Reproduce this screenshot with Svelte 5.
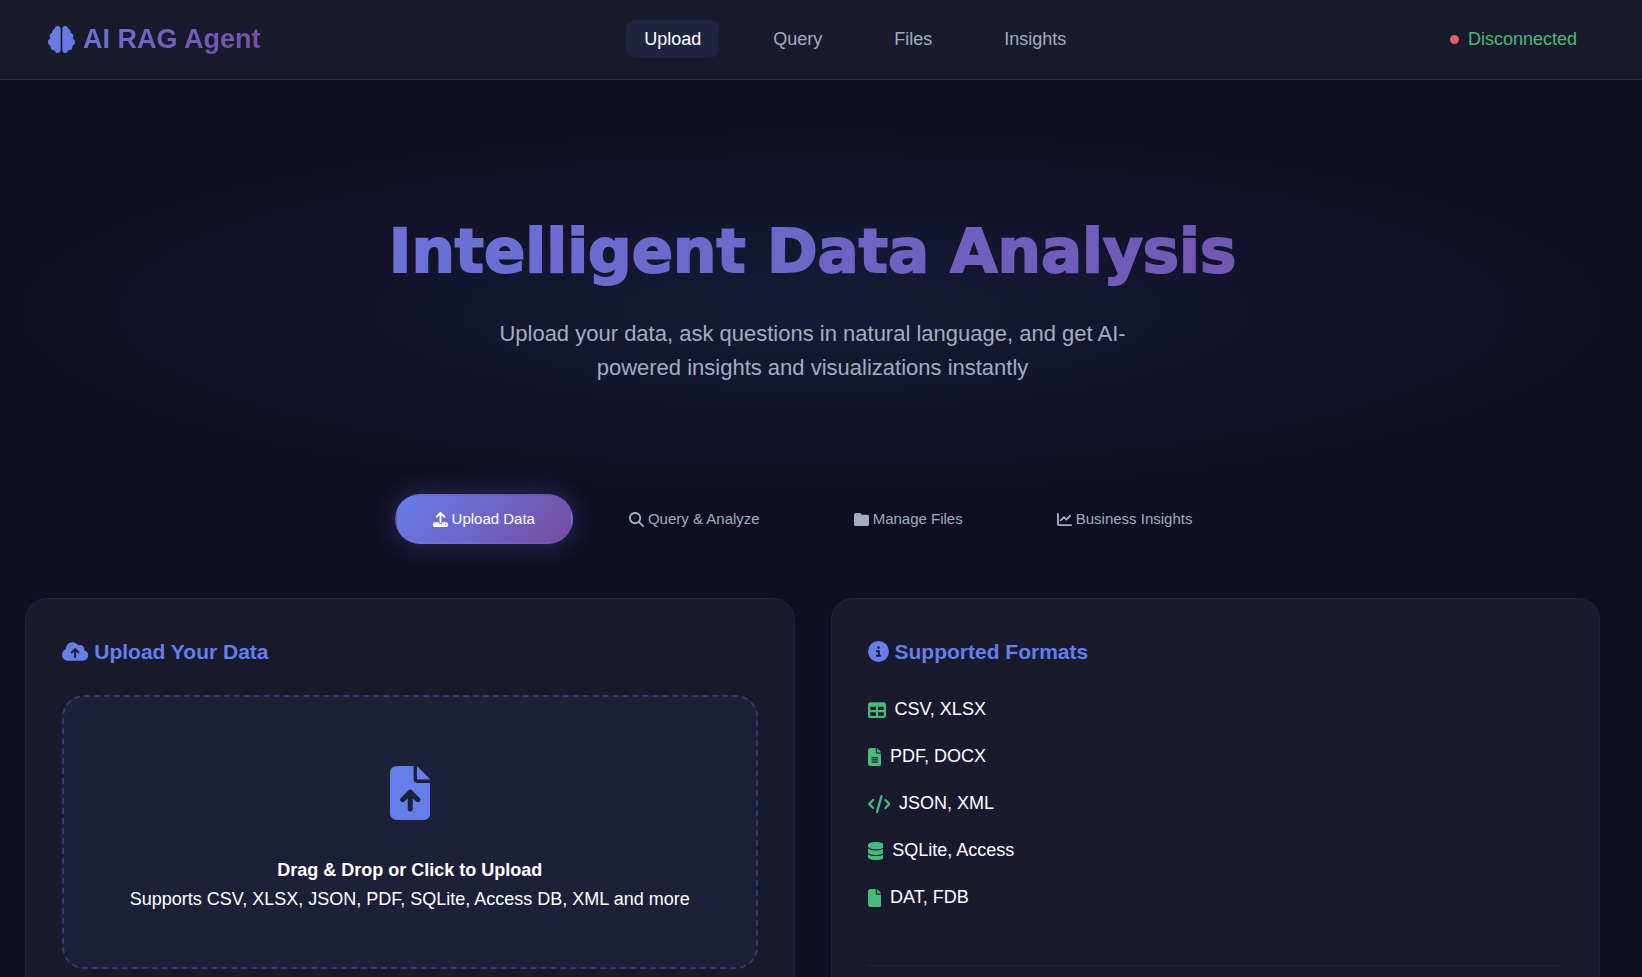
<script>
  const file = 'M64 0C28.7 0 0 28.7 0 64V448c0 35.3 28.7 64 64 64H320c35.3 0 64-28.7 64-64V160H256c-17.7 0-32-14.3-32-32V0H64zM256 0V128H384L256 0z';

  const icons = {
    upload: [512, 'M288 109.3V352c0 17.7-14.3 32-32 32s-32-14.3-32-32V109.3l-73.4 73.4c-12.5 12.5-32.8 12.5-45.3 0s-12.5-32.8 0-45.3l128-128c12.5-12.5 32.8-12.5 45.3 0l128 128c12.5 12.5 12.5 32.8 0 45.3s-32.8 12.5-45.3 0L288 109.3zM64 352H192c0 35.3 28.7 64 64 64s64-28.7 64-64H448c35.3 0 64 28.7 64 64v32c0 35.3-28.7 64-64 64H64c-35.3 0-64-28.7-64-64V416c0-35.3 28.7-64 64-64zM432 456a24 24 0 1 0 0-48 24 24 0 1 0 0 48z'],
    search: [512, 'M416 208c0 45.9-14.9 88.3-40 122.7L502.6 457.4c12.5 12.5 12.5 32.8 0 45.3s-32.8 12.5-45.3 0L330.7 376c-34.4 25.2-76.8 40-122.7 40C93.1 416 0 322.9 0 208S93.1 0 208 0S416 93.1 416 208zM208 352a144 144 0 1 0 0-288 144 144 0 1 0 0 288z'],
    folder: [512, 'M64 480H448c35.3 0 64-28.7 64-64V160c0-35.3-28.7-64-64-64H288c-10.1 0-19.6-4.7-25.6-12.8L243.2 57.6C231.1 41.5 212.1 32 192 32H64C28.7 32 0 60.7 0 96V416c0 35.3 28.7 64 64 64z'],
    chart: [512, 'M64 64c0-17.7-14.3-32-32-32S0 46.3 0 64V400c0 44.2 35.8 80 80 80H480c17.7 0 32-14.3 32-32s-14.3-32-32-32H80c-8.8 0-16-7.2-16-16V64zm406.6 86.6c12.5-12.5 12.5-32.8 0-45.3s-32.8-12.5-45.3 0L320 210.7l-57.4-57.4c-12.5-12.5-32.8-12.5-45.3 0l-112 112c-12.5 12.5-12.5 32.8 0 45.3s32.8 12.5 45.3 0L240 221.3l57.4 57.4c12.5 12.5 32.8 12.5 45.3 0l128-128z'],
    cloud: [640, 'M144 480C64.5 480 0 415.5 0 336c0-62.8 40.2-116.2 96.2-135.9c-.1-2.7-.2-5.4-.2-8.1c0-88.4 71.6-160 160-160c59.3 0 111 32.2 138.7 80.2C409.9 102 428.3 96 448 96c53 0 96 43 96 96c0 12.2-2.3 23.8-6.4 34.6C596 238.4 640 290.1 640 352c0 70.7-57.3 128-128 128H144zm79-217c-9.4 9.4-9.4 24.6 0 33.9s24.6 9.4 33.9 0l39-39V392c0 13.3 10.7 24 24 24s24-10.7 24-24V257.9l39 39c9.4 9.4 24.6 9.4 33.9 0s9.4-24.6 0-33.9l-80-80c-9.4-9.4-24.6-9.4-33.9 0l-80 80z'],
    fileUp: [384, file + 'M216 408c0 13.3-10.7 24-24 24s-24-10.7-24-24V305.9l-31 31c-9.4 9.4-24.6 9.4-33.9 0s-9.4-24.6 0-33.9l72-72c9.4-9.4 24.6-9.4 33.9 0l72 72c9.4 9.4 9.4 24.6 0 33.9s-24.6 9.4-33.9 0l-31-31V408z'],
    info: [512, 'M256 512A256 256 0 1 0 256 0a256 256 0 1 0 0 512zM216 336h24V272H216c-13.3 0-24-10.7-24-24s10.7-24 24-24h48c13.3 0 24 10.7 24 24v88h8c13.3 0 24 10.7 24 24s-10.7 24-24 24H216c-13.3 0-24-10.7-24-24s10.7-24 24-24zm40-208a32 32 0 1 1 0 64 32 32 0 1 1 0-64z'],
    table: [512, 'M64 256V160H224v96H64zm0 64H224v96H64V320zm224 96V320H448v96H288zM448 256H288V160H448v96zM64 32C28.7 32 0 60.7 0 96V416c0 35.3 28.7 64 64 64H448c35.3 0 64-28.7 64-64V96c0-35.3-28.7-64-64-64H64z'],
    fileLines: [384, file + 'M112 256H272c8.8 0 16 7.2 16 16s-7.2 16-16 16H112c-8.8 0-16-7.2-16-16s7.2-16 16-16zm0 64H272c8.8 0 16 7.2 16 16s-7.2 16-16 16H112c-8.8 0-16-7.2-16-16s7.2-16 16-16zm0 64H272c8.8 0 16 7.2 16 16s-7.2 16-16 16H112c-8.8 0-16-7.2-16-16s7.2-16 16-16z'],
    code: [640, 'M392.8 1.2c-17-4.9-34.7 5-39.6 22l-128 448c-4.9 17 5 34.7 22 39.6s34.7-5 39.6-22l128-448c4.9-17-5-34.7-22-39.6zm80.6 120.1c-12.5 12.5-12.5 32.8 0 45.3L562.7 256l-89.4 89.4c-12.5 12.5-12.5 32.8 0 45.3s32.8 12.5 45.3 0l112-112c12.5-12.5 12.5-32.8 0-45.3l-112-112c-12.5-12.5-32.8-12.5-45.3 0zm-306.7 0c-12.5-12.5-32.8-12.5-45.3 0l-112 112c-12.5 12.5-12.5 32.8 0 45.3l112 112c12.5 12.5 32.8 12.5 45.3 0s12.5-32.8 0-45.3L77.3 256l89.4-89.4c12.5-12.5 12.5-32.8 0-45.3z'],
    database: [448, 'M448 80v48c0 44.2-100.3 80-224 80S0 172.2 0 128V80C0 35.8 100.3 0 224 0S448 35.8 448 80zM393.2 214.7c20.8-7.4 39.9-16.9 54.8-28.6V288c0 44.2-100.3 80-224 80S0 332.2 0 288V186.1c14.9 11.8 34 21.2 54.8 28.6C99.7 230.7 159.5 240 224 240s124.3-9.3 169.2-25.3zM0 346.1c14.9 11.8 34 21.2 54.8 28.6C99.7 390.7 159.5 400 224 400s124.3-9.3 169.2-25.3c20.8-7.4 39.9-16.9 54.8-28.6V432c0 44.2-100.3 80-224 80S0 476.2 0 432V346.1z'],
    file: [384, file]
  };

  const links = ['Upload', 'Query', 'Files', 'Insights'];
  const tabs = [
    { icon: 'upload', label: 'Upload Data' },
    { icon: 'search', label: 'Query & Analyze' },
    { icon: 'folder', label: 'Manage Files' },
    { icon: 'chart', label: 'Business Insights' }
  ];
  const formats = [
    { icon: 'table', label: 'CSV, XLSX' },
    { icon: 'fileLines', label: 'PDF, DOCX' },
    { icon: 'code', label: 'JSON, XML' },
    { icon: 'database', label: 'SQLite, Access' },
    { icon: 'file', label: 'DAT, FDB' }
  ];

  let active = $state(0);
</script>

{#snippet icon(name)}
  <svg class="icon" viewBox="0 0 {icons[name][0]} 512" aria-hidden="true">
    <path fill="currentColor" fill-rule="evenodd" d={icons[name][1]} />
  </svg>
{/snippet}

<div class="page">
  <header>
    <div class="logo">
      <svg class="icon" viewBox="0 0 512 512" aria-hidden="true">
        <defs>
          <linearGradient id="brand" x1="0" y1="0" x2="1" y2="1">
            <stop offset="0" stop-color="#667eea" />
            <stop offset="1" stop-color="#6976dd" />
          </linearGradient>
        </defs>
        <path fill="url(#brand)" d="M184 0c30.9 0 56 25.1 56 56V456c0 30.9-25.1 56-56 56c-28.9 0-52.7-21.9-55.7-50.1c-5.2 1.4-10.7 2.1-16.3 2.1c-35.3 0-64-28.7-64-64c0-7.4 1.3-14.6 3.6-21.2C21.4 367.4 0 338.2 0 304c0-31.9 18.7-59.5 45.8-72.3C37.1 220.8 32 207 32 192c0-30.7 21.6-56.3 50.4-62.6C80.8 123.9 80 118 80 112c0-29.9 20.6-55.1 48.3-62.1C131.3 21.9 155.1 0 184 0zM328 0c28.9 0 52.6 21.9 55.7 49.9c27.8 7 48.3 32.1 48.3 62.1c0 6-.8 11.9-2.4 17.4c28.8 6.2 50.4 31.9 50.4 62.6c0 15-5.1 28.8-13.8 39.7C493.3 244.5 512 272.1 512 304c0 34.2-21.4 63.4-51.6 74.8c2.3 6.6 3.6 13.8 3.6 21.2c0 35.3-28.7 64-64 64c-5.6 0-11.1-.7-16.3-2.1c-3 28.2-26.8 50.1-55.7 50.1c-30.9 0-56-25.1-56-56V56c0-30.9 25.1-56 56-56z" />
      </svg>
      <span>AI RAG Agent</span>
    </div>
    <nav>
      {#each links as link, i}
        <a href="#{link.toLowerCase()}" class:active={active === i} onclick={() => (active = i)}>{link}</a>
      {/each}
    </nav>
    <div class="status"><span class="dot"></span><span>Disconnected</span></div>
  </header>

  <main>
    <section class="hero">
      <h1>Intelligent Data Analysis</h1>
      <p>Upload your data, ask questions in natural language, and get AI-powered insights and visualizations instantly</p>
    </section>

    <div class="tabs">
      {#each tabs as tab, i}
        <button type="button" class:active={active === i} onclick={() => (active = i)}>
          {@render icon(tab.icon)}<span>{tab.label}</span>
        </button>
      {/each}
    </div>

    <div class="cards">
      <section class="card">
        <h2>{@render icon('cloud')}<span>Upload Your Data</span></h2>
        <label class="drop">
          <input type="file" multiple />
          <span class="drop-icon">{@render icon('fileUp')}</span>
          <strong>Drag &amp; Drop or Click to Upload</strong>
          <span>Supports CSV, XLSX, JSON, PDF, SQLite, Access DB, XML and more</span>
        </label>
      </section>
      <section class="card">
        <h2>{@render icon('info')}<span>Supported Formats</span></h2>
        <ul>
          {#each formats as format}
            <li>{@render icon(format.icon)}<span>{format.label}</span></li>
          {/each}
        </ul>
        <hr />
      </section>
    </div>
  </main>
</div>

<style>
  :global(body) {
    margin: 0;
    background: #0f0f23;
  }

  .page {
    height: 100vh;
    overflow-y: auto;
    scrollbar-width: none;
    background: #0f0f23;
    color: #fff;
    font: 18px/29px "Liberation Sans", Arial, sans-serif;
  }

  .page * {
    box-sizing: border-box;
  }

  .icon {
    display: inline-block;
    height: 1em;
    width: auto;
    flex: none;
  }

  header {
    display: flex;
    align-items: center;
    justify-content: space-between;
    height: 80px;
    padding: 0 65px 1px 48px;
    background: #1a1a2e;
    border-bottom: 1px solid rgba(102, 126, 234, 0.2);
    line-height: 28px;
  }

  .logo {
    display: flex;
    align-items: center;
    gap: 8px;
    font-size: 27px;
    font-weight: 700;
  }

  .logo span {
    padding: 4px 0;
    background: linear-gradient(135deg, #6b75da, #764ba2);
    background-clip: text;
    -webkit-background-clip: text;
    color: transparent;
  }

  nav {
    display: flex;
    gap: 36px;
  }

  nav a {
    padding: 9px 18px;
    border-radius: 9px;
    line-height: 20px;
    color: #a0aec0;
    text-decoration: none;
  }

  nav a.active {
    background: rgba(102, 126, 234, 0.1);
    color: #fff;
  }

  .status {
    display: flex;
    align-items: center;
    gap: 9px;
    color: #48bb78;
  }

  .dot {
    width: 9px;
    height: 9px;
    border-radius: 50%;
    background: #e35f62;
  }

  main {
    padding-right: 17px;
  }

  .hero {
    margin-top: 48px;
    padding: 72px 36px 109px;
    text-align: center;
    background: radial-gradient(ellipse at center, rgba(102, 126, 234, 0.1) 0%, transparent 70%);
  }

  h1 {
    margin: 0 0 16px;
    font: 900 61px/101px "DejaVu Sans", sans-serif;
    background: linear-gradient(135deg, #667eea, #764ba2);
    background-clip: text;
    -webkit-background-clip: text;
    -webkit-text-stroke: 2px transparent;
    color: transparent;
  }

  .hero p {
    max-width: 640px;
    margin: 0 auto;
    font-size: 22px;
    line-height: 34px;
    color: #a0aec0;
  }

  .tabs {
    display: flex;
    justify-content: center;
    gap: 18px;
    margin-bottom: 54px;
  }

  button {
    display: flex;
    align-items: center;
    gap: 4px;
    height: 50px;
    padding: 0 36px;
    border: 2px solid transparent;
    border-radius: 25px;
    background: transparent;
    font: 15px/18px "Liberation Sans", Arial, sans-serif;
    color: #a0aec0;
    cursor: pointer;
  }

  button.active {
    background: linear-gradient(135deg, #667eea, #764ba2);
    box-shadow: 0 0 27px rgba(102, 126, 234, 0.3);
    color: #fff;
  }

  .cards {
    display: grid;
    grid-template-columns: 1fr 1fr;
    gap: 36px;
    padding: 0 25px 36px;
  }

  .card {
    padding: 36px;
    border: 1px solid rgba(102, 126, 234, 0.1);
    border-radius: 22px;
    background: #1a1a2e;
  }

  h2 {
    display: flex;
    align-items: center;
    gap: 6px;
    margin: 0 0 26px;
    font-size: 21px;
    line-height: 34px;
    color: #667eea;
  }

  h2 .icon {
    margin-bottom: 2px;
  }

  .drop {
    display: flex;
    flex-direction: column;
    align-items: center;
    padding: 54px 54px 53px;
    border: 2px dashed rgba(102, 126, 234, 0.3);
    border-radius: 22px;
    background: rgba(102, 126, 234, 0.06);
    text-align: center;
    cursor: pointer;
  }

  .drop input {
    position: absolute;
    width: 1px;
    height: 1px;
    opacity: 0;
  }

  .drop-icon {
    display: flex;
    align-items: center;
    height: 84px;
    margin-bottom: 21px;
    font-size: 54px;
    color: #667eea;
  }

  ul {
    display: flex;
    flex-direction: column;
    gap: 18px;
    margin: 0;
    padding: 0 0 18px;
    list-style: none;
  }

  li {
    display: flex;
    align-items: center;
    gap: 9px;
  }

  li .icon {
    color: #48bb78;
  }

  hr {
    margin: 35px 0 0;
    border: 0;
    border-top: 1px solid rgba(102, 126, 234, 0.1);
  }
</style>
